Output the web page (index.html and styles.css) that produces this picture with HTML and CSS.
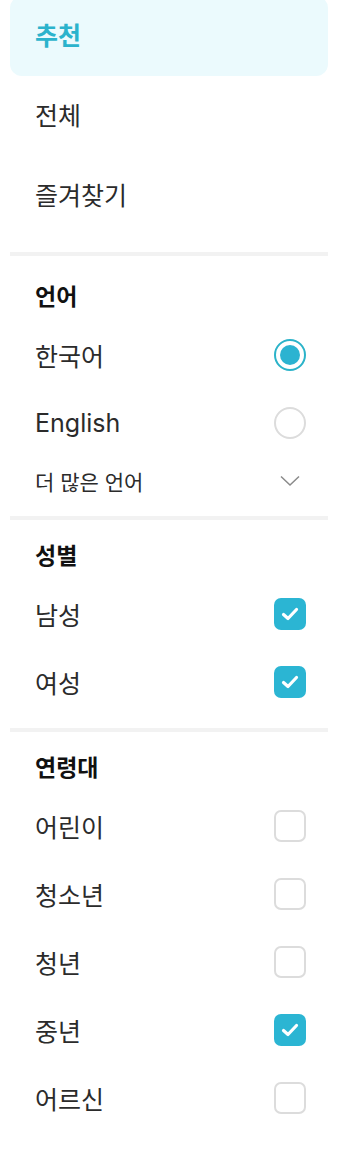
FILE: index.html
```html
<!DOCTYPE html>
<html lang="ko">
<head>
    <meta charset="UTF-8">
    <meta name="viewport" content="width=device-width, initial-scale=1.0">
    <title>필터</title>
    <link rel="stylesheet" href="styles.css">
</head>
<body>

    <div class="panel">
        <!-- 상단 메뉴 -->
        <ul class="nav">
            <li class="nav-item active">추천</li>
            <li class="nav-item">전체</li>
            <li class="nav-item">즐겨찾기</li>
        </ul>

        <div class="divider"></div>

        <!-- 언어 -->
        <div class="section first">
            <h3>언어</h3>
            <div class="row">
                <span>한국어</span>
                <span class="radio checked"></span>
            </div>
            <div class="row">
                <span>English</span>
                <span class="radio"></span>
            </div>
            <div class="row more">
                <span>더 많은 언어</span>
                <svg class="chevron" width="20" height="12" viewBox="0 0 20 12">
                    <path d="M1 1.5 L10 10 L19 1.5" fill="none" stroke="#8a8a8a" stroke-width="1.5"/>
                </svg>
            </div>
        </div>

        <div class="divider"></div>

        <!-- 성별 -->
        <div class="section">
            <h3>성별</h3>
            <div class="row">
                <span>남성</span>
                <span class="check checked"><svg width="32" height="32" viewBox="0 0 32 32"><path d="M9.5 16.5 L14 20.5 L22.5 11.5" fill="none" stroke="#fff" stroke-width="3.2" stroke-linecap="round" stroke-linejoin="round"/></svg></span>
            </div>
            <div class="row">
                <span>여성</span>
                <span class="check checked"><svg width="32" height="32" viewBox="0 0 32 32"><path d="M9.5 16.5 L14 20.5 L22.5 11.5" fill="none" stroke="#fff" stroke-width="3.2" stroke-linecap="round" stroke-linejoin="round"/></svg></span>
            </div>
        </div>

        <div class="divider"></div>

        <!-- 연령대 -->
        <div class="section">
            <h3>연령대</h3>
            <div class="row">
                <span>어린이</span>
                <span class="check"></span>
            </div>
            <div class="row">
                <span>청소년</span>
                <span class="check"></span>
            </div>
            <div class="row">
                <span>청년</span>
                <span class="check"></span>
            </div>
            <div class="row">
                <span>중년</span>
                <span class="check checked"><svg width="32" height="32" viewBox="0 0 32 32"><path d="M9.5 16.5 L14 20.5 L22.5 11.5" fill="none" stroke="#fff" stroke-width="3.2" stroke-linecap="round" stroke-linejoin="round"/></svg></span>
            </div>
            <div class="row">
                <span>어르신</span>
                <span class="check"></span>
            </div>
        </div>
    </div>

</body>
</html>
```

FILE: styles.css
```css
body {
    margin: 0;
    background: #fff;
    font-family: Inter, "Noto Sans CJK KR", sans-serif;
    color: #2b2b2b;
}
.panel {
    padding: 0 10px;
}
.nav {
    list-style: none;
    margin: -4px 0 0;
    padding: 0 0 16px;
}
.nav-item {
    height: 80px;
    line-height: 80px;
    padding-left: 25px;
    font-size: 25px;
}
.nav-item.active {
    background-color: #ebfafd;
    border-radius: 12px;
    color: #2bb3cc;
    font-weight: 700;
}
.divider {
    height: 4px;
    background-color: #f2f2f2;
}
.section {
    padding: 22px 0 12px;
}
.section.first {
    padding-top: 27px;
}
.section h3 {
    margin: 0 0 10px;
    padding-left: 25px;
    height: 28px;
    line-height: 28px;
    font-size: 23px;
    font-weight: 700;
    color: #111;
}
.row {
    display: flex;
    align-items: center;
    justify-content: space-between;
    height: 68px;
    padding: 0 22px 0 25px;
    font-size: 25px;
}
.row.more {
    height: 47px;
    font-size: 21px;
}
.chevron {
    margin-right: 6px;
}
.radio {
    width: 32px;
    height: 32px;
    box-sizing: border-box;
    border: 2px solid #dcdcdc;
    border-radius: 50%;
    position: relative;
}
.radio.checked {
    border-color: #2bb3c9;
}
.radio.checked::after {
    content: "";
    position: absolute;
    left: 4px;
    top: 4px;
    width: 20px;
    height: 20px;
    border-radius: 50%;
    background-color: #2bb3d1;
}
.check {
    width: 32px;
    height: 32px;
    box-sizing: border-box;
    border: 2px solid #dcdcdc;
    border-radius: 7px;
}
.check.checked {
    border: none;
    background-color: #2bb5d3;
}
.check svg {
    display: block;
}
```
